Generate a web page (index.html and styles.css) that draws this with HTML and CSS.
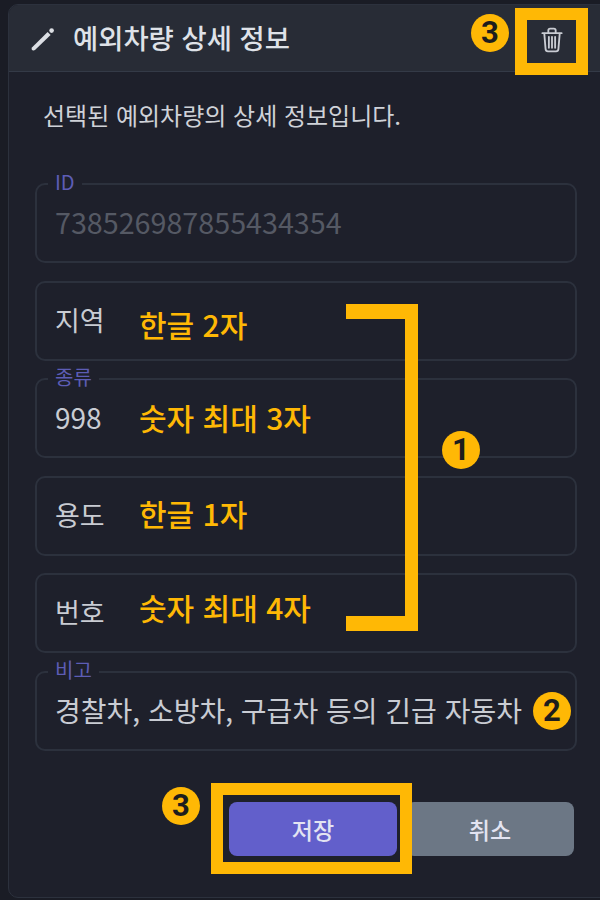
FILE: index.html
```html
<!DOCTYPE html>
<html lang="ko">

<head>
    <meta charset="UTF-8" />
    <title>예외차량 상세 정보</title>
    <meta name="viewport" content="width=device-width, initial-scale=1" />
    <link rel="stylesheet" href="styles.css">
</head>

<body>
    <div class="card">
        <div class="card-header">
            <svg class="icon-pen" viewBox="0 0 24 24" width="24" height="24">
                <path d="M0.6 22.2 Q0.4 21 1.2 20.2 L16.6 5 L19.6 8 L4 23 Q3.2 23.6 2 23.4 Q1 23.2 0.6 22.2 Z"
                    fill="#dcdfe4" />
                <circle cx="20.6" cy="3.6" r="2.3" fill="#dcdfe4" />
            </svg>
            <h2>예외차량 상세 정보</h2>
            <button class="icon-btn" type="button" aria-label="삭제">
                <svg viewBox="0 0 24 28" width="22" height="26" fill="none" stroke="#c9ccd3" stroke-width="2"
                    stroke-linecap="round" stroke-linejoin="round">
                    <path d="M1.5 6.5 H22.5" />
                    <path d="M8 6 V3.4 Q8 1.5 10 1.5 H14 Q16 1.5 16 3.4 V6" />
                    <path d="M3.6 7 L5 24 Q5.2 26.4 7.6 26.4 H16.4 Q18.8 26.4 19 24 L20.4 7" />
                    <path d="M8.6 10.5 V22.5 M12 10.5 V22.5 M15.4 10.5 V22.5" />
                </svg>
            </button>
        </div>

        <div class="card-body">
            <p class="desc">선택된 예외차량의 상세 정보입니다.</p>

            <div class="fields">
                <div class="field">
                    <span class="field-label">ID</span>
                    <span class="value disabled">738526987855434354</span>
                </div>
                <div class="field">
                    <span class="value">지역</span>
                    <span class="note note-a">한글 2자</span>
                </div>
                <div class="field">
                    <span class="field-label">종류</span>
                    <span class="value number">998</span>
                    <span class="note note-b">숫자 최대 3자</span>
                </div>
                <div class="field">
                    <span class="value">용도</span>
                    <span class="note note-c">한글 1자</span>
                </div>
                <div class="field">
                    <span class="value">번호</span>
                    <span class="note note-d">숫자 최대 4자</span>
                </div>
                <div class="field">
                    <span class="field-label">비고</span>
                    <span class="value number">경찰차, 소방차, 구급차 등의 긴급 자동차</span>
                </div>
            </div>

            <div class="actions">
                <button class="btn btn-save" type="button">저장</button>
                <button class="btn btn-cancel" type="button">취소</button>
            </div>
        </div>
    </div>

    <!-- 설명용 표시 -->
    <div class="frame frame-trash"></div>
    <div class="frame frame-save"></div>
    <div class="bracket"></div>
    <span class="badge badge-top">3</span>
    <span class="badge badge-one">1</span>
    <span class="badge badge-two">2</span>
    <span class="badge badge-save">3</span>
</body>

</html>
```

FILE: styles.css
```css
html,
body {
    height: 100%;
}

body {
    position: relative;
    box-sizing: border-box;
    margin: 0;
    padding: 4px 0 0 8px;
    overflow: hidden;
    background: #1a1c25;
    color: #c9ccd3;
    font-family: "Noto Sans CJK KR", "Noto Sans", sans-serif;
}

.card {
    box-sizing: border-box;
    width: 610px;
    height: 894px;
    background: #1e202b;
    border: 1px solid #2c313d;
    border-radius: 10px;
    overflow: hidden;
}

.card-header {
    display: flex;
    align-items: center;
    box-sizing: border-box;
    height: 67px;
    padding: 0 0 0 22px;
    background: #282c36;
    border-bottom: 1px solid #343a47;
}

.icon-pen {
    margin-right: 18px;
    margin-top: 2px;
}

.card-header h2 {
    margin: 0;
    font-size: 27.4px;
    font-weight: 500;
    line-height: 1;
    color: #dfe2e8;
}

.icon-btn {
    display: flex;
    position: absolute;
    left: 541px;
    top: 27px;
    padding: 0;
    background: none;
    border: none;
}

.card-body {
    width: 542px;
    margin-left: 26px;
}

.desc {
    margin: 0;
    padding: 28px 0 0 8px;
    height: 81px;
    box-sizing: border-box;
    font-size: 24px;
    line-height: 30px;
    color: #cfd2d8;
}

.fields {
    display: flex;
    flex-direction: column;
    gap: 17.5px;
    margin-top: 30px;
}

.field {
    position: relative;
    display: flex;
    align-items: center;
    box-sizing: border-box;
    height: 80px;
    padding: 0 0 2px 18px;
    border: 2px solid #2c313d;
    border-radius: 10px;
}

.field-label {
    position: absolute;
    left: 11px;
    top: -16px;
    padding: 0 7px;
    background: #1e202b;
    font-size: 20px;
    line-height: 26px;
    color: #5d5db5;
}

.value {
    font-size: 27px;
    line-height: 36px;
    white-space: nowrap;
}

.value.disabled {
    font-size: 28.7px;
    color: #555964;
}

.value.number {
    font-size: 28px;
}

.note {
    position: absolute;
    left: 102px;
    font-size: 30px;
    font-weight: 500;
    line-height: 36px;
    color: #ffb805;
    white-space: nowrap;
}

.note-a {
    top: 23px;
}

.note-b {
    top: 19px;
}

.note-c {
    top: 17px;
}

.note-d {
    top: 14px;
}

.actions {
    display: flex;
    justify-content: flex-end;
    gap: 9px;
    margin-top: 51px;
    padding-right: 3px;
}

.btn {
    height: 54px;
    width: 168px;
    border: none;
    border-radius: 8px;
    font-family: inherit;
    font-size: 23px;
    font-weight: 500;
    color: #e3e4f2;
}

.btn-save {
    background: #625fcb;
}

.btn-cancel {
    background: #6c7785;
}

/* 노란 표시 */
.frame {
    position: absolute;
    box-sizing: border-box;
    border: 12px solid #ffb805;
}

.frame-trash {
    left: 515px;
    top: 8px;
    width: 73px;
    height: 67px;
}

.frame-save {
    left: 211px;
    top: 783px;
    width: 201px;
    height: 91px;
}

.bracket {
    position: absolute;
    box-sizing: border-box;
    left: 346px;
    top: 304px;
    width: 72px;
    height: 327px;
    border: solid #ffb805;
    border-width: 15px 13px 15px 0;
}

.badge {
    position: absolute;
    width: 38px;
    height: 38px;
    border-radius: 50%;
    background: #ffb805;
    color: #1d1d1d;
    font-family: Roboto, sans-serif;
    font-size: 31px;
    font-weight: 700;
    line-height: 38px;
    text-align: center;
}

.badge-top {
    left: 471px;
    top: 14px;
}

.badge-one {
    left: 442px;
    top: 431px;
}

.badge-two {
    left: 533px;
    top: 692px;
}

.badge-save {
    left: 162px;
    top: 787px;
}
```
